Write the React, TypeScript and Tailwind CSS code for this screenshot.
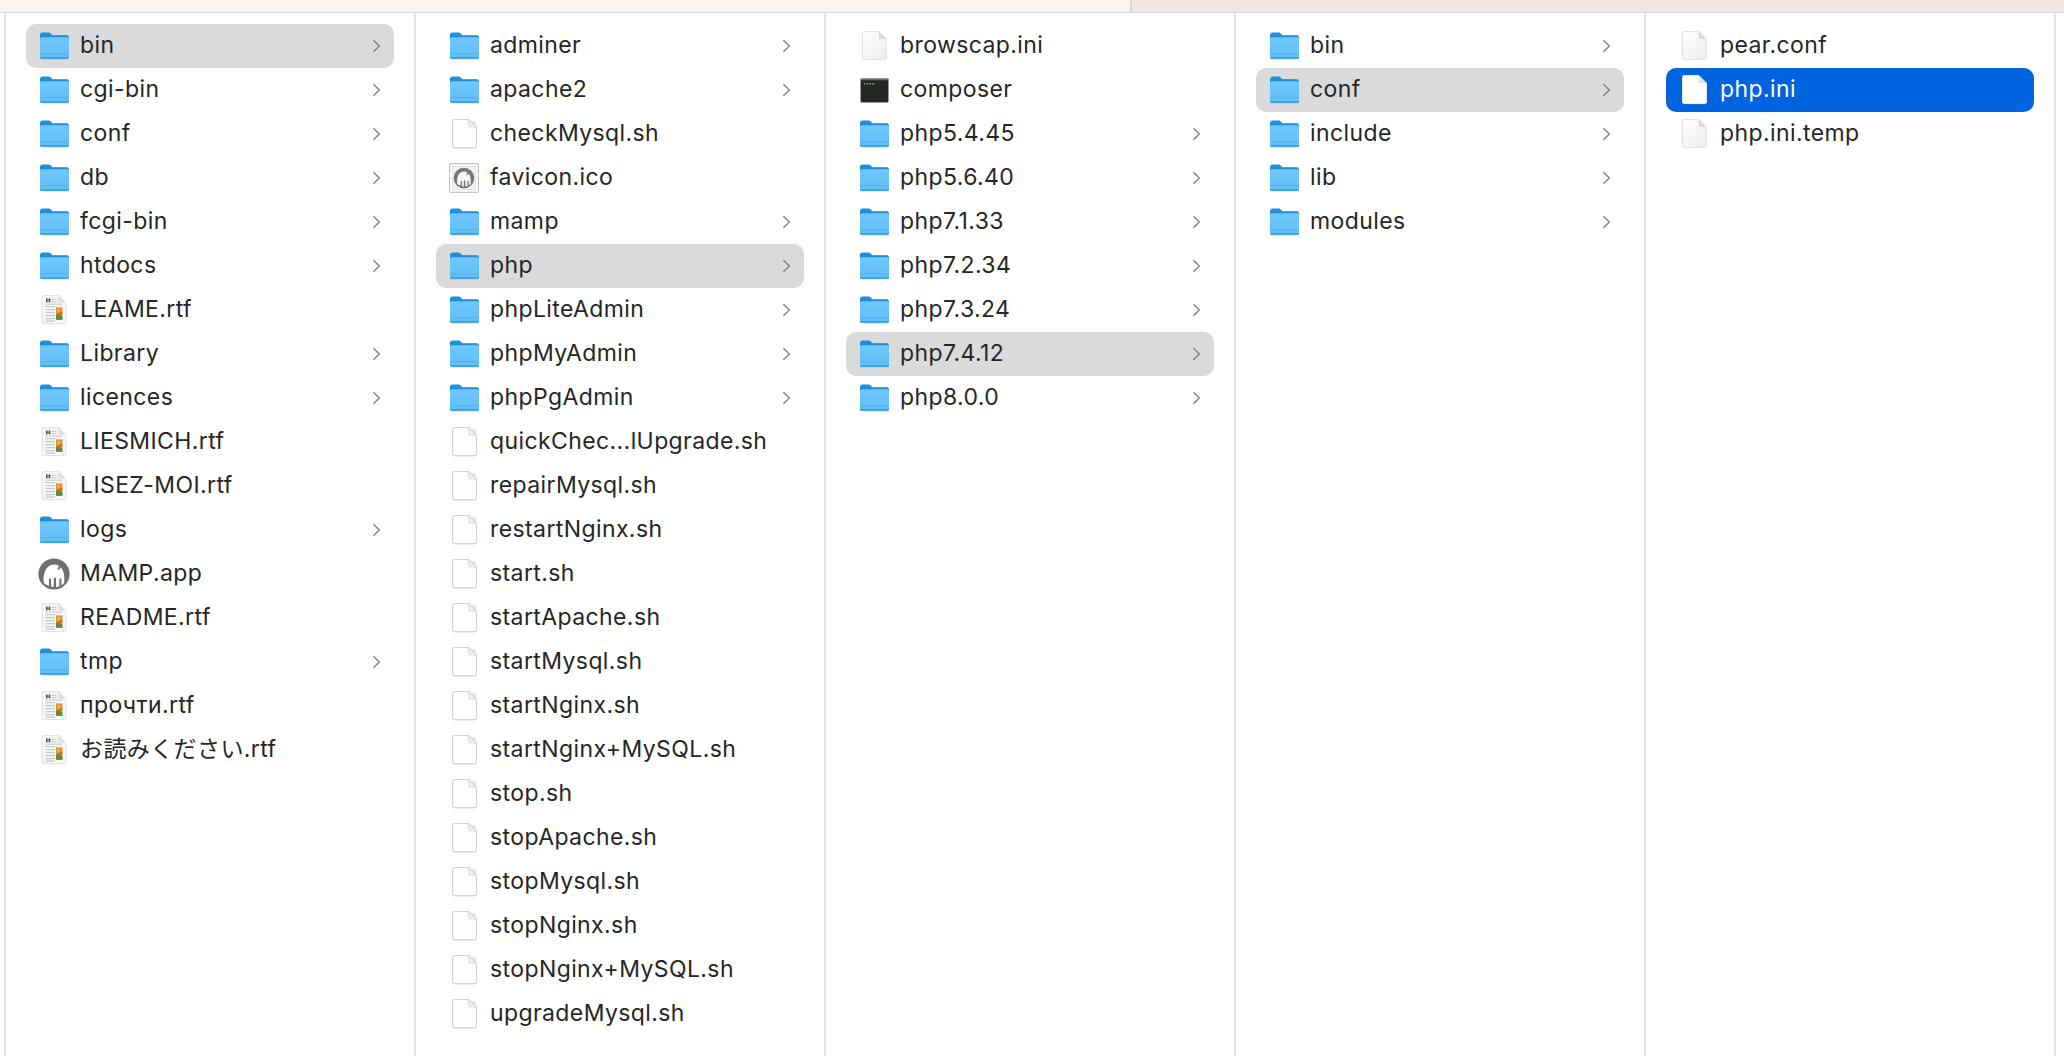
import { useId } from "react";

type Kind = "folder" | "rtf" | "doc" | "sh" | "mamp" | "favicon" | "terminal";

type Item = {
  name: string;
  kind: Kind;
  active?: boolean;
  selected?: boolean;
};

const f = (name: string, active?: boolean): Item => ({ name, kind: "folder", active });
const sh = (name: string): Item => ({ name, kind: "sh" });
const rtf = (name: string): Item => ({ name, kind: "rtf" });

const columns: Item[][] = [
  [
    f("bin", true),
    f("cgi-bin"),
    f("conf"),
    f("db"),
    f("fcgi-bin"),
    f("htdocs"),
    rtf("LEAME.rtf"),
    f("Library"),
    f("licences"),
    rtf("LIESMICH.rtf"),
    rtf("LISEZ-MOI.rtf"),
    f("logs"),
    { name: "MAMP.app", kind: "mamp" },
    rtf("README.rtf"),
    f("tmp"),
    rtf("прочти.rtf"),
    rtf("お読みください.rtf"),
  ],
  [
    f("adminer"),
    f("apache2"),
    sh("checkMysql.sh"),
    { name: "favicon.ico", kind: "favicon" },
    f("mamp"),
    f("php", true),
    f("phpLiteAdmin"),
    f("phpMyAdmin"),
    f("phpPgAdmin"),
    sh("quickChec...lUpgrade.sh"),
    sh("repairMysql.sh"),
    sh("restartNginx.sh"),
    sh("start.sh"),
    sh("startApache.sh"),
    sh("startMysql.sh"),
    sh("startNginx.sh"),
    sh("startNginx+MySQL.sh"),
    sh("stop.sh"),
    sh("stopApache.sh"),
    sh("stopMysql.sh"),
    sh("stopNginx.sh"),
    sh("stopNginx+MySQL.sh"),
    sh("upgradeMysql.sh"),
  ],
  [
    { name: "browscap.ini", kind: "doc" },
    { name: "composer", kind: "terminal" },
    f("php5.4.45"),
    f("php5.6.40"),
    f("php7.1.33"),
    f("php7.2.34"),
    f("php7.3.24"),
    f("php7.4.12", true),
    f("php8.0.0"),
  ],
  [f("bin"), f("conf", true), f("include"), f("lib"), f("modules")],
  [
    { name: "pear.conf", kind: "doc" },
    { name: "php.ini", kind: "doc", selected: true },
    { name: "php.ini.temp", kind: "doc" },
  ],
];

function FolderIcon() {
  const id = useId();
  return (
    <svg width="29" height="28" viewBox="0 0 29 28">
      <defs>
        <linearGradient id={id} x1="0" y1="0" x2="0" y2="1">
          <stop offset="0" stopColor="#6fc8fc" />
          <stop offset="1" stopColor="#5fbdf7" />
        </linearGradient>
      </defs>
      <rect x="0.5" y="3" width="28" height="24.6" rx="2" fill="#8a8a8a" opacity="0.35" />
      <path
        d="M0 3.2Q0 0.6 2.6 0.6H8.4Q10 0.6 11 1.8L12.2 3.2H26.6Q29 3.2 29 5.6V10H0Z"
        fill="#1f8edb"
      />
      <rect x="0" y="5.2" width="29" height="21.6" rx="1.6" fill={`url(#${id})`} />
      <rect x="0" y="21.2" width="29" height="1" fill="#58addf" opacity="0.75" />
      <path d="M0 25.2V25.4Q0 26.8 1.6 26.8H27.4Q29 26.8 29 25.4V25.2Z" fill="#3b98d8" />
    </svg>
  );
}

function PageShape({ fill, stroke }: { fill: string; stroke?: string }) {
  return (
    <path
      d="M2.2 0.6H16.8L24.4 8V27Q24.4 28.6 22.8 28.6H2.2Q0.6 28.6 0.6 27V2.2Q0.6 0.6 2.2 0.6Z"
      fill={fill}
      stroke={stroke}
      strokeWidth="1"
    />
  );
}

function DocIcon({ selected }: { selected?: boolean }) {
  const id = useId();
  return (
    <svg width="25" height="30" viewBox="0 0 25 30">
      <defs>
        <linearGradient id={id} x1="0" y1="0" x2="1" y2="1">
          <stop offset="0" stopColor="#ffffff" />
          <stop offset="1" stopColor="#ececec" />
        </linearGradient>
      </defs>
      <PageShape fill={selected ? "#ffffff" : `url(#${id})`} stroke={selected ? "#f4f4f4" : "#e2e2e2"} />
      <path d="M16.8 0.6V6.6Q16.8 8 18.2 8H24.4Z" fill={selected ? "#d8e4f6" : "#d9d9d9"} />
    </svg>
  );
}

function ShIcon() {
  return (
    <svg width="25" height="30" viewBox="0 0 25 30">
      <rect x="1" y="2" width="23" height="27.6" rx="1.6" fill="#9a9a9a" opacity="0.25" />
      <PageShape fill="#ffffff" stroke="#d0d0d0" />
      <path d="M16.8 0.6V6.6Q16.8 8 18.2 8H24.4Z" fill="#f0f0f0" stroke="#d0d0d0" strokeWidth="0.8" />
    </svg>
  );
}

function RtfIcon() {
  const textLines = [11, 14, 17, 20, 23, 25.5];
  return (
    <svg width="26" height="30" viewBox="0 0 25 30">
      <PageShape fill="#f7f7f7" stroke="#e0e0e0" />
      <path d="M16.8 0.6V6.6Q16.8 8 18.2 8H24.4Z" fill="#e0e0e0" />
      <rect x="4.5" y="3.4" width="1.6" height="4" fill="#555555" />
      <rect x="7.2" y="3.4" width="1.6" height="4" fill="#555555" />
      <rect x="6" y="4.8" width="1.4" height="1" fill="#555555" />
      <rect x="10" y="4" width="5" height="1" fill="#c4c4c4" />
      <rect x="10" y="6.2" width="5" height="1" fill="#c4c4c4" />
      {textLines.map((y) => (
        <rect key={y} x="4" y={y} width="9.5" height="1.2" fill="#c8c8c8" />
      ))}
      <rect x="4" y="8.6" width="16.5" height="1.2" fill="#cfcfcf" />
      <rect x="14.5" y="12.4" width="6.4" height="12.4" fill="#e48f2c" />
      <path d="M14.5 24.8V20L17 18.6L20.9 21.4V24.8Z" fill="#5f8f3e" />
      <circle cx="17.2" cy="15.6" r="2" fill="#f0b144" />
      <circle cx="19.6" cy="18.4" r="1.3" fill="#d26a22" />
    </svg>
  );
}

function Elephant({ fill }: { fill: string }) {
  return (
    <path
      d="M5.8 25C4.6 16.4 7.4 6.6 16 6.4C18 6.4 19.6 6.8 21 7.6L19.4 11C20.4 12.2 21.6 12 22.4 9.2C25.4 11.6 26.8 16 26.2 25C25.2 26 24.2 26.8 23.4 27.2V21.2C23 19.8 21.8 19.8 21.4 21.2V28.2C20.2 28.6 19 28.8 18 28.9V20.6C17.6 19.2 16.2 19.2 15.8 20.6V29C14.8 29 13.8 28.8 13 28.6V21.4C12.6 20 11.4 20 11 21.4V27.8C9.2 27.2 7.2 26.4 5.8 25Z"
      fill={fill}
    />
  );
}

function MampIcon() {
  return (
    <svg width="32" height="32" viewBox="0 0 32 32">
      <circle cx="16" cy="16" r="15.6" fill="#6f6f6f" />
      <Elephant fill="#ffffff" />
    </svg>
  );
}

function FaviconIcon() {
  return (
    <svg width="30" height="30" viewBox="0 0 30 30">
      <rect x="0.6" y="0.6" width="28.8" height="28.8" rx="1" fill="#ffffff" stroke="#c4c4c4" strokeWidth="1.2" />
      <rect x="3.4" y="3.4" width="23.2" height="23.2" fill="#f2f2f2" stroke="#dddddd" strokeWidth="0.8" />
      <g transform="translate(4.4 4.4) scale(0.66)">
        <circle cx="16" cy="16" r="15.6" fill="#777777" />
        <Elephant fill="#f5f5f5" />
      </g>
    </svg>
  );
}

function TerminalIcon() {
  return (
    <svg width="29" height="25" viewBox="0 0 29 25">
      <rect x="0.5" y="0.5" width="28" height="24" rx="1.4" fill="#262626" stroke="#9a9a9a" strokeWidth="0.8" />
      <rect x="0.9" y="0.9" width="27.2" height="1.4" fill="#6e6e6e" />
      <rect x="4" y="5" width="1.6" height="1.6" fill="#3fb950" />
      <rect x="6.6" y="5" width="1.6" height="1.6" fill="#3fb950" />
      <rect x="9.2" y="5" width="1.6" height="1.6" fill="#3fb950" />
      <rect x="11.8" y="5" width="1.6" height="1.6" fill="#3fb950" />
      <rect x="14" y="5" width="1.2" height="1.6" fill="#2c7d3a" />
    </svg>
  );
}

function ItemIcon({ item }: { item: Item }) {
  switch (item.kind) {
    case "folder":
      return <FolderIcon />;
    case "rtf":
      return <RtfIcon />;
    case "doc":
      return <DocIcon selected={item.selected} />;
    case "sh":
      return <ShIcon />;
    case "mamp":
      return <MampIcon />;
    case "favicon":
      return <FaviconIcon />;
    case "terminal":
      return <TerminalIcon />;
  }
}

function Chevron() {
  return (
    <svg width="9" height="14" viewBox="0 0 9 14" className="shrink-0">
      <path d="M1.4 1.2L7.4 7L1.4 12.8" fill="none" stroke="#7c7c7c" strokeWidth="1.3" />
    </svg>
  );
}

function Row({ item }: { item: Item }) {
  const bg = item.selected ? "bg-[#0064e1] text-white" : item.active ? "bg-[#dadada] text-[#262626]" : "text-[#262626]";
  return (
    <div className={`flex h-[44px] items-center rounded-[10px] pl-[12px] pr-[13px] ${bg}`}>
      <div className="flex w-[32px] shrink-0 items-center justify-center">
        <ItemIcon item={item} />
      </div>
      <span className="ml-[10px] flex-1 whitespace-nowrap pb-[2px] text-[23px] leading-[28px] tracking-[0.4px]">
        {item.name}
      </span>
      {item.kind === "folder" ? <Chevron /> : null}
    </div>
  );
}

export default function App() {
  return (
    <div
      className="flex h-screen w-full flex-col overflow-hidden bg-white"
      style={{ fontFamily: 'Inter, "Noto Sans CJK JP", sans-serif' }}
    >
      <div className="flex h-[13px] shrink-0 border-b border-[#d8d8d8]">
        <div className="w-[1132px] border-r-2 border-[#d8d8d8] bg-[#fdf3f3]" />
        <div className="flex-1 bg-[#f0e7e7]" />
      </div>
      <div className="flex min-h-0 flex-1 pl-[4px]">
        {columns.map((items, i) => (
          <div
            key={i}
            className={`flex shrink-0 flex-col border-l-2 border-[#e4e4e4] pl-[20px] pr-[20px] pt-[11px] ${
              i === columns.length - 1 ? "w-[412px] border-r-2" : "w-[410px]"
            }`}
          >
            {items.map((item) => (
              <Row key={item.name} item={item} />
            ))}
          </div>
        ))}
      </div>
    </div>
  );
}
